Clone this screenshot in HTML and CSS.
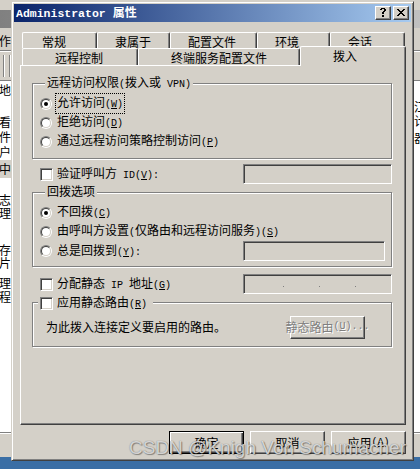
FILE: index.html
```html
<!DOCTYPE html>
<html lang="zh-CN">
<head>
<meta charset="utf-8">
<title>Administrator 属性</title>
<link rel="stylesheet" href="styles.css">
</head>
<body>
<div class="bgwin">
  <div class="bg-top"></div>
  <div class="bg-title"></div>
  <div class="bg-menu"><span class="bg-menu-text">作(</span></div>
  <div class="bg-tool"><i class="bg-sep"></i><i class="bg-sep"></i></div>
  <div class="bg-list">
    <div class="bg-left">
      <div class="bl">地</div>
      <div class="bl">看</div>
      <div class="bl">件</div>
      <div class="bl">户</div>
      <div class="bl bl-hi">中</div>
      <div class="bl">志</div>
      <div class="bl">理</div>
      <div class="bl">存</div>
      <div class="bl">片</div>
      <div class="bl">理</div>
      <div class="bl">程</div>
    </div>
    <div class="bg-right">
      <div class="br">江</div>
      <div class="br">计</div>
      <div class="br">器</div>
    </div>
  </div>
  <div class="bg-status"></div>
</div>

<div class="dialog">
  <div class="titlebar">
    <span class="title"><span class="title-en">Administrator </span>属性</span>
    <div class="cap-btns">
      <span class="cap-btn"><svg width="6" height="9" viewBox="0 0 6 9" shape-rendering="crispEdges"><path d="M1 0h4v1h-4zM0 1h2v1h-2zM4 1h2v1h-2zM4 2h2v1h-2zM3 3h2v1h-2zM2 4h2v2h-2zM2 7h2v2h-2z" fill="#000"/></svg></span>
      <span class="cap-btn"><svg width="8" height="7" viewBox="0 0 8 7" shape-rendering="crispEdges"><path d="M0 0h2v1h-2zM6 0h2v1h-2zM1 1h2v1h-2zM5 1h2v1h-2zM2 2h4v1h-4zM3 3h2v1h-2zM2 4h4v1h-4zM1 5h2v1h-2zM5 5h2v1h-2zM0 6h2v1h-2zM6 6h2v1h-2z" fill="#000"/></svg></span>
    </div>
  </div>

  <div class="client">
    <div class="tabs">
      <div class="tabrow row1">
        <div class="tab w75 first">常规</div>
        <div class="tab w73">隶属于</div>
        <div class="tab w87">配置文件</div>
        <div class="tab w73">环境</div>
        <div class="tab w75">会话</div>
      </div>
      <div class="tabrow row2">
        <div class="tab w116">远程控制</div>
        <div class="tab w162">终端服务配置文件</div>
        <div class="tab w106 sel">拨入</div>
      </div>
    </div>

    <div class="panel">
      <div class="group g1">
        <div class="legend">远程访问权限<span class="a">(</span>拨入或<span class="a"> VPN)</span></div>
        <div class="opt"><span class="radio on"></span><span class="lbl focus">允许访问<span class="a">(<u>W</u>)</span></span></div>
        <div class="opt"><span class="radio"></span><span class="lbl">拒绝访问<span class="a">(<u>D</u>)</span></span></div>
        <div class="opt"><span class="radio"></span><span class="lbl">通过远程访问策略控制访问<span class="a">(<u>P</u>)</span></span></div>
      </div>

      <div class="row r-verify">
        <span class="check"></span><span class="lbl">验证呼叫方<span class="a"> ID(<u>V</u>):</span></span>
        <span class="field"></span>
      </div>

      <div class="group g2">
        <div class="legend">回拨选项</div>
        <div class="opt"><span class="radio on"></span><span class="lbl">不回拨<span class="a">(<u>C</u>)</span></span></div>
        <div class="opt"><span class="radio"></span><span class="lbl">由呼叫方设置<span class="a">(</span>仅路由和远程访问服务<span class="a">)(<u>S</u>)</span></span></div>
        <div class="opt opt-field"><span class="radio"></span><span class="lbl">总是回拨到<span class="a">(<u>Y</u>):</span></span><span class="field field-short"></span></div>
      </div>

      <div class="row r-ip">
        <span class="check"></span><span class="lbl">分配静态<span class="a"> IP </span>地址<span class="a">(<u>G</u>)</span></span>
        <span class="field ipfield"><i class="dot"></i><i class="dot"></i><i class="dot"></i></span>
      </div>

      <div class="group g3">
        <div class="legend legend-check"><span class="check"></span><span class="lbl">应用静态路由<span class="a">(<u>R</u>)</span></span></div>
        <div class="route-row">
          <span class="lbl">为此拨入连接定义要启用的路由。</span>
          <span class="btn dis route-btn">静态路由<span class="a">(<u>U</u>)...</span></span>
        </div>
      </div>
    </div>

    <div class="btns">
      <span class="btn def">确定</span>
      <span class="btn">取消</span>
      <span class="btn">应用<span class="a">(<u>A</u>)</span></span>
    </div>
  </div>
</div>

<div class="wm">CSDN @Knigh Von Schumacher</div>
</body>
</html>
```

FILE: styles.css
```css
* { box-sizing: border-box; }
html, body { margin: 0; padding: 0; }
body {
  width: 420px;
  height: 469px;
  overflow: hidden;
  position: relative;
  background: #3a6ea5;
  font-family: "Noto Sans CJK SC", "Noto Sans", sans-serif;
  font-size: 12px;
  color: #000;
}
.a { font-family: "Liberation Mono", "DejaVu Sans Mono", monospace; font-size: 10px; white-space: pre; }
u { text-decoration: underline; text-underline-offset: 1px; }

/* ---------- background window ---------- */
.bgwin {
  position: absolute;
  left: 0; top: 0;
  width: 420px; height: 457px;
  background: #d4d0c8;
  display: flex;
  flex-direction: column;
  overflow: hidden;
}
.bg-top { height: 10px; }
.bg-title { height: 18px; background: linear-gradient(to right, #808080, #c0c0c0); }
.bg-menu { height: 22px; padding-top: 6px; line-height: 14px; white-space: nowrap; }
.bg-menu-text { display: block; margin-left: -1px; }
.bg-tool {
  height: 30px;
  border-top: 1px solid #808080;
  box-shadow: inset 0 1px #fff;
  display: flex;
  align-items: center;
  gap: 4px;
  padding-left: 3px;
}
.bg-sep { width: 2px; height: 22px; border-left: 1px solid #808080; border-right: 1px solid #fff; }
.bg-list {
  flex: 1;
  background: #fff;
  border-top: 1px solid #808080;
  display: flex;
  justify-content: space-between;
}
.bg-left { margin-left: -1px; width: 14px; }
.bl { height: 13px; line-height: 13px; }
.bl:nth-child(1) { margin-top: 2px; }
.bl:nth-child(2) { margin-top: 19px; }
.bl:nth-child(3) { margin-top: 2px; }
.bl:nth-child(4) { margin-top: 2px; }
.bl:nth-child(5) { margin-top: 2px; height: 18px; line-height: 18px; background: #d4d0c8; }
.bl:nth-child(6) { margin-top: 15px; }
.bl:nth-child(7) { margin-top: 0; }
.bl:nth-child(8) { margin-top: 24px; }
.bl:nth-child(9) { margin-top: 0; }
.bl:nth-child(10) { margin-top: 7px; }
.bl:nth-child(11) { margin-top: 1px; }
.bg-right { width: 6px; overflow: hidden; white-space: nowrap; }
.br { height: 14px; line-height: 14px; }
.br:nth-child(1) { margin-top: 19px; }
.br:nth-child(3) { margin-top: 3px; }
.bg-status { height: 25px; border-top: 1px solid #808080; box-shadow: inset 0 1px #fff; }

/* ---------- dialog ---------- */
.dialog {
  position: absolute;
  left: 11px; top: 1px;
  width: 403px; height: 460px;
  background: #d4d0c8;
  border: 1px solid;
  border-color: #d4d0c8 #404040 #404040 #d4d0c8;
  box-shadow: inset 1px 1px #fff, inset -1px -1px #808080;
  padding: 2px;
  display: flex;
  flex-direction: column;
  z-index: 1;
}
.titlebar {
  height: 18px;
  flex: none;
  background: linear-gradient(to right, #0a246a, #a6caf0);
  display: flex;
  align-items: center;
  padding: 0 2px;
}
.title {
  flex: 1;
  color: #fff;
  font-weight: bold;
  font-size: 12px;
  line-height: 18px;
  white-space: pre;
}
.title-en { font-family: "Liberation Mono", monospace; font-size: 11.5px; }
.cap-btns { display: flex; gap: 2px; }
.cap-btn {
  width: 16px; height: 14px;
  background: #d4d0c8;
  border: 1px solid;
  border-color: #fff #404040 #404040 #fff;
  box-shadow: inset -1px -1px #808080;
  display: flex;
  align-items: center;
  justify-content: center;
  padding: 0 1px 1px 0;
}

.client {
  flex: 1;
  padding: 10px 5px 0 6px;
  display: flex;
  flex-direction: column;
}

/* tabs */
.tabs { margin-left: 2px; }
.tabrow { display: flex; }
.row1 { height: 16px; }
.row2 { height: 17px; }
.tab {
  height: 100%;
  flex: none;
  background: #d4d0c8;
  border-top: 1px solid #fff;
  border-left: 1px solid #fff;
  border-right: 1px solid #404040;
  box-shadow: inset -1px 0 #808080;
  border-radius: 2px 2px 0 0;
  padding-top: 1px;
  line-height: 15px;
  white-space: nowrap;
}
.row1 .tab { padding-left: 17px; }
.row1 .tab.first { padding-left: 19px; }
.row2 .tab { padding-left: 32px; }
.w73 { width: 73px; }
.w75 { width: 75px; }
.w87 { width: 87px; }
.w106 { width: 106px; }
.w116 { width: 116px; }
.w162 { width: 162px; }
.tab.sel {
  height: 20px;
  margin-top: -2px;
  position: relative;
  z-index: 2;
}

/* panel */
.panel {
  height: 360px;
  flex: none;
  border: 1px solid;
  border-color: #fff #404040 #404040 #fff;
  box-shadow: inset -1px -1px #808080;
  padding: 17px 11px 0 11px;
}

.group {
  width: 360px;
  border: 1px solid #808080;
  box-shadow: inset 1px 1px #fff, 1px 1px #fff;
}
.legend {
  display: block;
  width: max-content;
  height: 14px;
  line-height: 14px;
  margin: -9px 0 5px 5px;
  padding: 0 2px;
  background: #d4d0c8;
  white-space: pre;
}
.g1 { padding: 0 0 7px 7px; }
.g2 { margin-top: 8px; padding: 0 0 5px 7px; }
.g3 { margin-top: 8px; padding: 0 0 8px 13px; }

.opt { display: flex; align-items: center; height: 19px; white-space: nowrap; }
.opt-field { height: 20px; }
.lbl { line-height: 14px; white-space: pre; }
.focus { outline: 1px dotted #000; padding: 1px 1px; margin-left: -1px; }

.radio {
  width: 12px; height: 12px;
  flex: none;
  border-radius: 50%;
  border: 1px solid;
  border-color: #808080 #fff #fff #808080;
  position: relative;
  margin-right: 5px;
}
.radio::before {
  content: "";
  position: absolute;
  inset: 0;
  border-radius: 50%;
  border: 1px solid;
  border-color: #404040 #d4d0c8 #d4d0c8 #404040;
  background: #fff;
}
.radio.on::after {
  content: "";
  position: absolute;
  left: 3px; top: 3px;
  width: 4px; height: 4px;
  border-radius: 50%;
  background: #000;
}

.check {
  width: 13px; height: 13px;
  flex: none;
  background: #fff;
  border: 1px solid;
  border-color: #808080 #fff #fff #808080;
  box-shadow: inset 1px 1px #404040, inset -1px -1px #d4d0c8;
  margin-right: 4px;
}

.row {
  width: 360px;
  height: 20px;
  display: flex;
  align-items: center;
  padding-left: 8px;
}
.r-verify { margin-top: 5px; }
.r-ip { margin-top: 7px; }

.field {
  margin-left: auto;
  width: 149px; height: 20px;
  flex: none;
  background: #d4d0c8;
  border: 1px solid;
  border-color: #808080 #fff #fff #808080;
  box-shadow: inset 1px 1px #404040, inset -1px -1px #d4d0c8;
}
.field-short { width: 142px; margin-right: 6px; }
.ipfield { display: flex; justify-content: space-evenly; align-items: center; padding: 4px 0 0 4px; }
.dot { width: 1px; height: 1px; background: #808080; }

.legend-check {
  display: flex;
  align-items: center;
  margin: -7px 0 6px -8px;
  padding: 0 6px 0 2px;
}

.route-row {
  height: 22px;
  display: flex;
  align-items: center;
  padding-right: 26px;
}
.route-btn { margin-left: auto; width: 99px; height: 22px; }

/* buttons */
.btns {
  display: flex;
  justify-content: flex-end;
  gap: 6px;
  margin-top: 6px;
}
.btn {
  width: 75px; height: 23px;
  flex: none;
  display: flex;
  align-items: center;
  justify-content: center;
  background: #d4d0c8;
  border: 1px solid;
  border-color: #fff #404040 #404040 #fff;
  box-shadow: inset -1px -1px #808080;
  line-height: 14px;
  white-space: nowrap;
}
.btn.def {
  border: 1px solid #000;
  box-shadow: inset 1px 1px #fff, inset -1px -1px #404040, inset -2px -2px #808080;
}
.btn.dis { color: #808080; text-shadow: 1px 1px 0 #fff; }

/* watermark */
.wm {
  position: absolute;
  left: 129px; top: 438px;
  z-index: 5;
  font-family: "Liberation Sans", Arial, sans-serif;
  font-size: 19px;
  line-height: 19px;
  white-space: nowrap;
  color: rgba(240, 240, 240, 0.8);
  text-shadow: 0 0 1px rgba(60, 60, 60, 0.7), 1px 1px 1px rgba(0, 0, 0, 0.35);
}
```
